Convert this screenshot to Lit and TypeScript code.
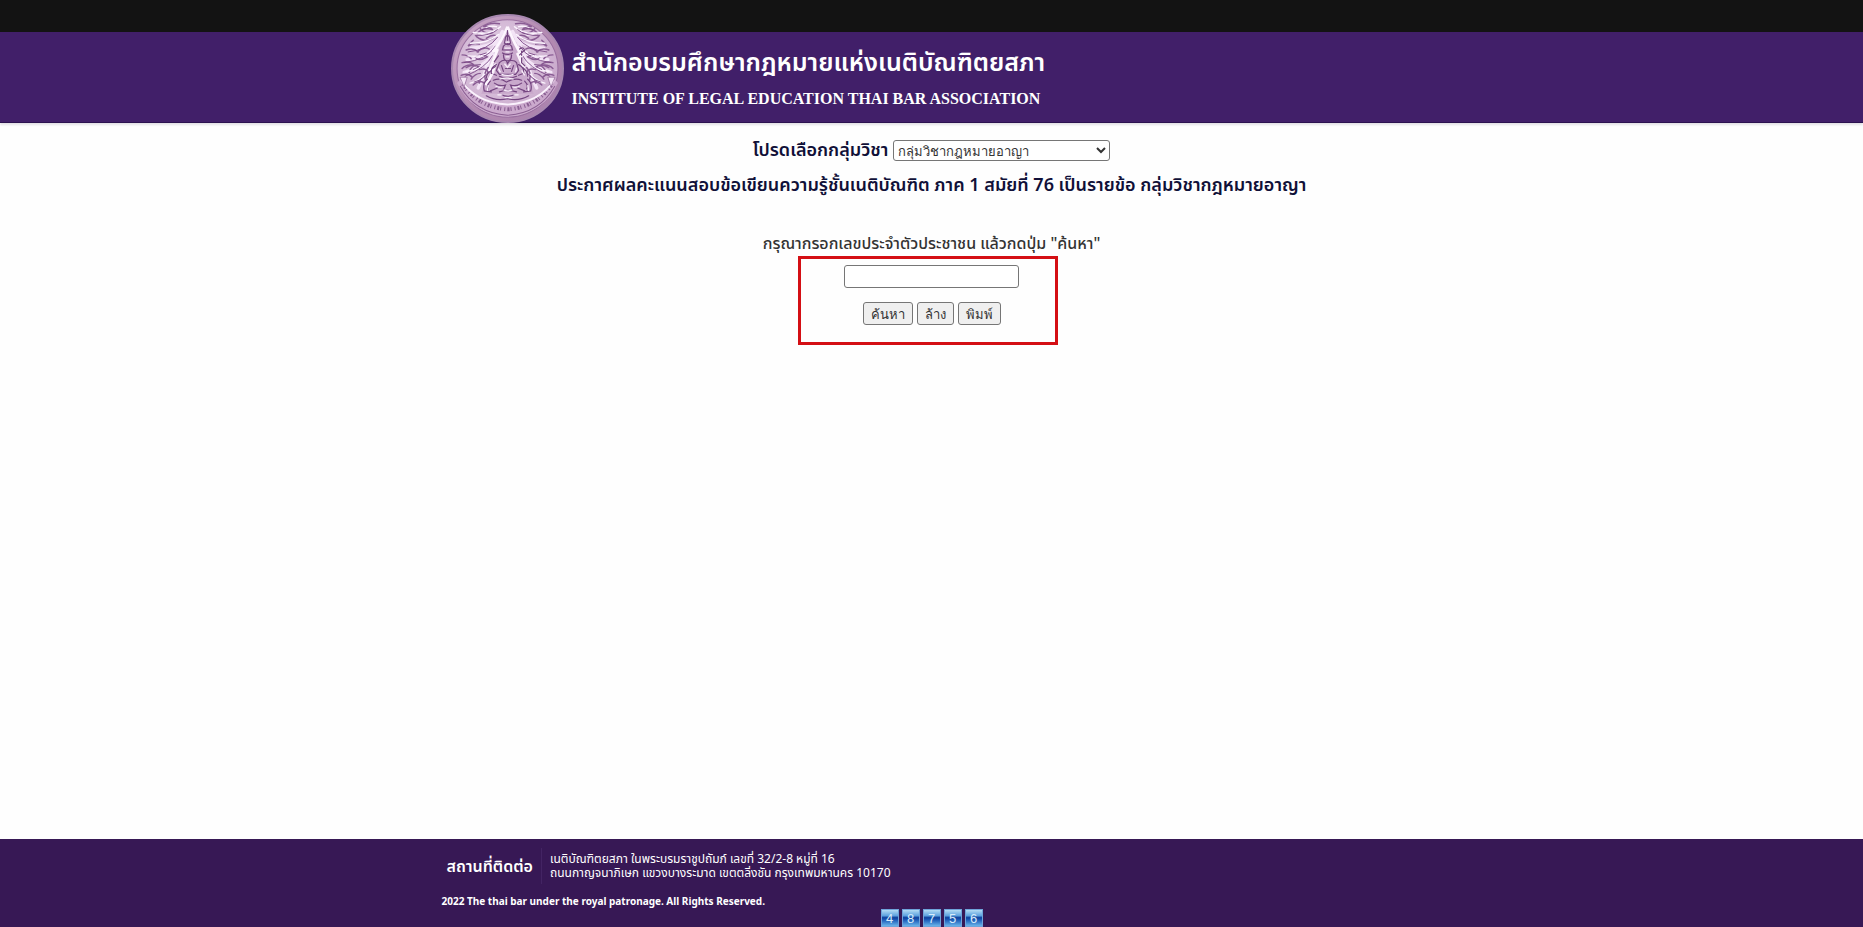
import { LitElement, html, css, svg } from "lit";
import { customElement, state } from "lit/decorators.js";

const SUBJECTS = ["กลุ่มวิชากฎหมายอาญา", "กลุ่มวิชากฎหมายแพ่ง"];

@customElement("bar-seal")
class BarSeal extends LitElement {
  static styles = css`
    :host { display: block; }
    svg { display: block; width: 100%; height: 100%; overflow: visible; }
  `;

  private foliage() {
    return svg`
      <g fill="none" stroke-linecap="round">
        <path stroke="#f3e4f6" stroke-width="3.4" d="M49 18Q39 36 34 52Q31 64 25 76M45 27Q34 34 18 35M42 34Q32 46 14 47M39 42Q30 55 11 60"/>
        <g stroke="#8a5c94" stroke-width="1.5">
          <path d="M46 10q-9-2-16 3q7-1 9 3q-9-3-15 4M27 15q4 6 12 4M23 23q8 7 17 2M20 27q-3 2-5 6q5-4 11-2M13 37q7-3 12 2M9 42q6 0 9 4M9 50q8-2 12 3q-7-2-12 3M24 39q6-6 12-3M22 44q7-4 12 0q-6 4-11 2M27 52q-9 0-11 8M8 63q7-3 11 2M18 67q4-6 9-6M26 57q7-2 9 3M33 25q5-4 9-3"/>
          <path d="M13 55q7-4 12-1M31 63q-4 2-5 8M35 55q-5 6-3 12M20 73q6-6 11-2"/>
        </g>
        <g stroke="#fbf3fd" stroke-width="1.5">
          <path d="M47 13q-9 9-27 6M45 21q-10 9-28 9M37 38q-8 7-22 5M35 50q-7 7-22 9M31 62q-5 7-14 9M33 14q5-2 10-1M27 20q5 3 9 1"/>
        </g>
        <path stroke="#7a4886" stroke-width=".9" d="M44 24Q35 37 15 39M42 33Q34 47 11 50M39 43Q33 55 12 64M44 16Q37 23 22 22M37 56Q32 67 21 70M29 16l7-2M27 42l6-2M20 57l6-3"/>
      </g>`;
  }

  render() {
    return html`
      <svg viewBox="0 0 112 112" preserveAspectRatio="none" role="img" aria-label="Seal">
        <defs>
          <linearGradient id="rim" x1="0" y1="0" x2="1" y2="1">
            <stop offset="0" stop-color="#cba9ca" />
            <stop offset=".5" stop-color="#b48bb2" />
            <stop offset="1" stop-color="#a980ad" />
          </linearGradient>
          <radialGradient id="field" cx=".42" cy=".4" r=".6">
            <stop offset="0" stop-color="#e6d5e9" />
            <stop offset="1" stop-color="#caaacc" />
          </radialGradient>
        </defs>
        <circle cx="56" cy="56" r="55" fill="url(#rim)" stroke="#a888b0" stroke-width="2" />
        <circle cx="56" cy="56" r="50" fill="url(#field)" stroke="#9a6fa0" stroke-width="1" />
        <g transform="translate(2 0)">${this.foliage()}</g>
        <g transform="translate(110 0) scale(-1 1)">${this.foliage()}</g>
        <path d="M56 13Q50 30 43 46Q37 64 30 82H82Q77 64 69 46Q61 30 56 13Z" fill="#c9a9cc" />
        <path d="M56 13Q50 29 42 38L46 37L38 58L44 52Q40 65 34 73M56 13Q62 29 70 43L66 41L74 60" fill="none" stroke="#fdf6fe" stroke-width="2.6" stroke-linejoin="round" />
        <g fill="none" stroke="#744580" stroke-width="1.2" stroke-linecap="round">
          <path d="M56 17v10M54 24q2-4 4 0l1 6q-3 3-6 0zM52 33q4-5 8 0l1 4h-10zM51 40q5 3 10 0M52 42q0 6 4 6t4-6M48 50q4-4 7-2l1 3 2-3q5-1 7 2l2 8-3 4H48l-3-4zM50 53l2 6M62 53l-2 6M54 56h5M45 52q-6 3-5 9l5 2M67 52q6 3 5 9l-5 2M48 64q8 4 17 0M42 68q7-3 13 2q8-5 15-2M43 71q5 4 11 2l-2 5M70 71q-5 4-11 2l2 5M46 76l-7 3M66 76l7 3M48 80q8-3 17 0M50 83q6 3 13 0"/>
          <path d="M36 67q-5 4-3 12l7 1M39 69q-4 4-2 8M76 67q5 4 3 12l-7 1M73 69q4 4 2 8M35 84q10 6 21 3q11 3 21-3M40 58q-5 3-5 8M71 55q5 4 5 9M70 38v12l3 3M73 37l-5 5M68 36q4-3 5 2M47 43l-4 6M44 54l-3 2" />
        </g>
        <g fill="none" stroke="#f7edf9" stroke-width="1.3">
          <path d="M54 29h4M53 35h6M54 39h4M54 44h4M53 51l3 4 3-4M47 56l2 4M65 55l-1 5M50 62q6 2 12 0M48 67q7-2 14 0M44 74q4 2 7 1M61 75q4 1 7-1M52 78q4 2 9 0M37 73l-1 6M76 73l1 6M40 64l3-5M70 58l3 5M46 83h5M62 83h5M67 46l4-3M53 86h7" />
        </g>
        <path d="M9 67Q22 90 56 92Q90 90 103 67L106 71Q92 103 56 105Q20 103 6 71Z" fill="#cba9cd" />
        <path d="M12 72Q27 96 56 98Q85 96 100 72" fill="none" stroke="#8b6093" stroke-width="4" stroke-dasharray="1 2 2 1 1 3" />
        <path d="M10 68Q24 91 56 93Q88 91 102 68" fill="none" stroke="#faf1fc" stroke-width="2" />
        <path d="M9 74Q24 102 56 104Q88 102 103 74" fill="none" stroke="#8b5f92" stroke-width="1" />
        <path d="M9 65l7 0-3 10zM103 65l-7 0 3 10z" fill="#f4e7f6" stroke="#85548c" stroke-width=".6" />
      </svg>
    `;
  }
}

@customElement("app-root")
class AppRoot extends LitElement {
  static styles = css`
    :host {
      display: flex;
      flex-direction: column;
      min-height: 100vh;
      background: #fefefe;
      color: #333;
      font-family: Tahoma, "Noto Sans", "Noto Sans Thai", "Liberation Sans", sans-serif;
      font-size: 14px;
    }
    * { box-sizing: border-box; }
    .topbar { height: 32px; background: #131313; }
    .wrap { width: 100%; max-width: 980px; margin: 0 auto; }
    .masthead {
      height: 91px;
      background: #411f69;
      border-bottom: 1px solid #2c1250;
      box-shadow: 0 2px 2px #e4e2e6;
    }
    .brand { display: flex; gap: 8px; padding-left: 9px; }
    .seal { width: 113px; height: 109px; margin-top: -18px; flex: none; }
    .names { padding-top: 8px; color: #fff; white-space: nowrap; }
    .thai-name { margin: 0; font-size: 25px; line-height: 42px; font-weight: 600; }
    .eng-name {
      margin: 0;
      font: bold 16px/34px "Liberation Serif", serif;
    }
    main {
      flex: 1;
      display: flex;
      flex-direction: column;
      align-items: center;
      padding: 15px 0;
    }
    .subject { display: flex; align-items: center; gap: 5px; height: 24px; }
    .subject label, .notice { font-size: 18px; font-weight: 600; color: #101038; }
    select {
      width: 217px;
      height: 21px;
      border: 1px solid #767676;
      border-radius: 3px;
      background: #fff;
      color: #333;
      font: 13px Tahoma, "Noto Sans", sans-serif;
      padding: 0;
    }
    .notice { margin: 8px 0 0; line-height: 28px; text-align: center; }
    .hint { margin-top: 33px; font-size: 16px; line-height: 24px; font-weight: 500; }
    .search {
      display: flex;
      flex-direction: column;
      align-items: center;
      gap: 14px;
      width: 260px;
      height: 89px;
      margin: 1px 8px 0 0;
      padding: 6px 0 0 8px;
      border: 3px solid #d40f14;
    }
    input {
      width: 175px;
      height: 23px;
      border: 1px solid #767676;
      border-radius: 3px;
      background: #fff;
      font-size: 14px;
      flex: none;
    }
    .actions { display: flex; gap: 4px; }
    button {
      height: 23px;
      padding: 0 7px;
      border: 1px solid #767676;
      border-radius: 3px;
      background: #efefef;
      color: #333;
      font: 13px/20px Tahoma, "Noto Sans", sans-serif;
      white-space: nowrap;
    }
    footer { height: 88px; background: #371855; color: #fff; }
    .contact { display: flex; align-items: center; height: 52px; padding: 2px 0 0 5px; }
    .contact h2 { margin: 0; padding-right: 8px; font-size: 16px; line-height: 36px; font-weight: 600; }
    address {
      border-left: 1px solid #432463;
      padding: 4px 0 4px 8px;
      font-style: normal;
      font-size: 12px;
      line-height: 14px;
    }
    .copyright { margin: 0; height: 18px; font: bold 10px/20px "Noto Sans", sans-serif; }
    .counter { display: flex; justify-content: center; gap: 3px; height: 18px; }
    .digit {
      width: 18px;
      height: 18px;
      border: 1px solid #6fa4da;
      background: linear-gradient(#b4dcf4 0, #5fa3df 35%, #0c3f9c 48%, #1c5cb8 62%, #69b4ea 100%);
      color: #d9ecfb;
      font: 13px/17px "Liberation Sans", sans-serif;
      text-align: center;
    }
  `;

  @state() private subject = SUBJECTS[0];
  @state() private citizenId = "";

  render() {
    return html`
      <div class="topbar"></div>
      <header class="masthead">
        <div class="wrap brand">
          <bar-seal class="seal"></bar-seal>
          <div class="names">
            <h1 class="thai-name">สำนักอบรมศึกษากฎหมายแห่งเนติบัณฑิตยสภา</h1>
            <p class="eng-name">INSTITUTE OF LEGAL EDUCATION THAI BAR ASSOCIATION</p>
          </div>
        </div>
      </header>
      <main>
        <div class="subject">
          <label for="subject">โปรดเลือกกลุ่มวิชา</label>
          <select id="subject" @change=${(e: Event) => (this.subject = (e.target as HTMLSelectElement).value)}>
            ${SUBJECTS.map((s) => html`<option ?selected=${s === this.subject}>${s}</option>`)}
          </select>
        </div>
        <p class="notice">ประกาศผลคะแนนสอบข้อเขียนความรู้ชั้นเนติบัณฑิต ภาค 1 สมัยที่ 76 เป็นรายข้อ ${this.subject}</p>
        <label class="hint" for="citizen">กรุณากรอกเลขประจำตัวประชาชน แล้วกดปุ่ม "ค้นหา"</label>
        <div class="search">
          <input id="citizen" type="text" .value=${this.citizenId}
            @input=${(e: Event) => (this.citizenId = (e.target as HTMLInputElement).value)} />
          <div class="actions">
            <button type="button">ค้นหา</button>
            <button type="button" @click=${() => (this.citizenId = "")}>ล้าง</button>
            <button type="button" @click=${() => window.print()}>พิมพ์</button>
          </div>
        </div>
      </main>
      <footer>
        <div class="wrap">
          <div class="contact">
            <h2>สถานที่ติดต่อ</h2>
            <address>
              เนติบัณฑิตยสภา ในพระบรมราชูปถัมภ์ เลขที่ 32/2-8 หมู่ที่ 16<br />
              ถนนกาญจนาภิเษก แขวงบางระมาด เขตตลิ่งชัน กรุงเทพมหานคร 10170
            </address>
          </div>
          <p class="copyright">2022 The thai bar under the royal patronage. All Rights Reserved.</p>
          <div class="counter">${[..."48756"].map((d) => html`<span class="digit">${d}</span>`)}</div>
        </div>
      </footer>
    `;
  }
}
